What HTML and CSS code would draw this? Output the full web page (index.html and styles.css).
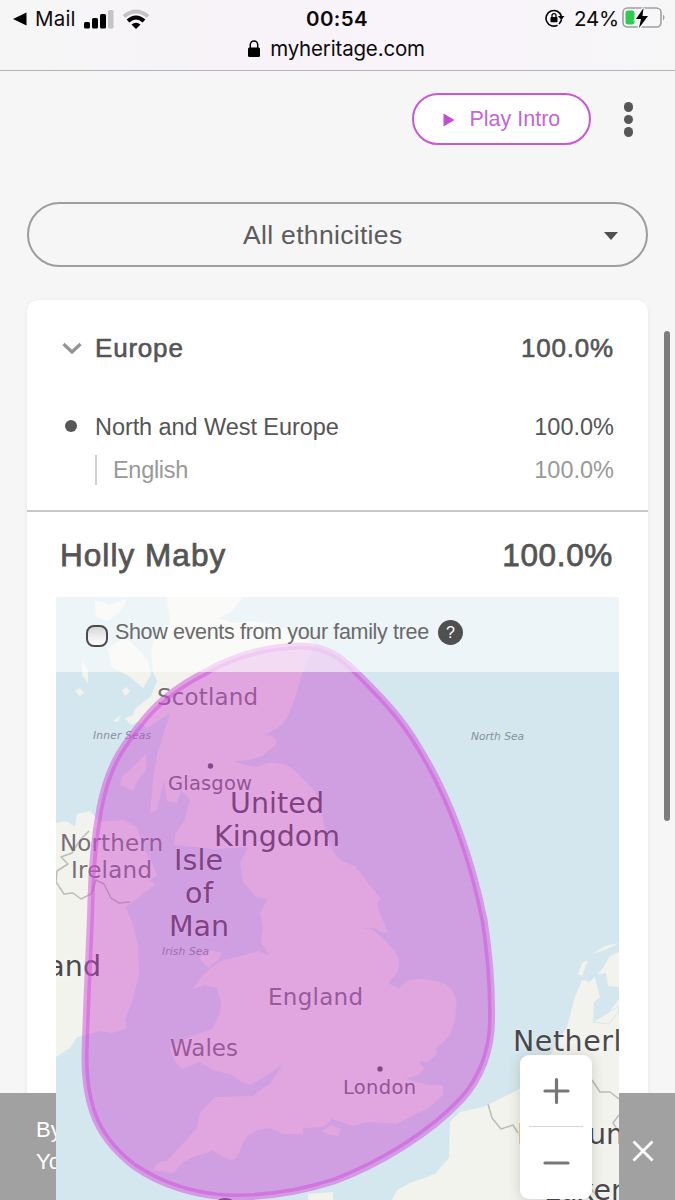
FILE: index.html
```html
<!DOCTYPE html>
<html lang="en">
<head>
<meta charset="utf-8">
<title>Ethnicity Estimate</title>
<link rel="stylesheet" href="styles.css">
</head>
<body>
<header class="browser-bar">
  <div class="status">
    <div class="status-left">
      <svg class="back" width="14" height="14" viewBox="0 0 14 14"><path d="M0 7 13.500 .5v13z"/></svg>
      <span class="carrier">Mail</span>
      <svg class="signal" width="30" height="20" viewBox="0 0 30 20"><rect x="0" y="13" width="6" height="6.500" rx="1.500"/><rect x="8" y="9" width="6" height="10.500" rx="1.500"/><rect x="16" y="5" width="6" height="14.500" rx="1.500"/><rect x="24" y="1" width="5.500" height="18.500" rx="1.500" fill="#c4c3c5"/></svg>
      <svg class="wifi" width="28" height="20" viewBox="0 0 28 20"><g fill="none" stroke-width="4"><path d="M2 7.500Q14-2.500 26 7.500" stroke="#c4c3c5"/><path d="M6 12Q14 5 22 12" stroke="#000"/></g><path d="M9.500 15.500Q14 12 18.500 15.500L14 20z"/></svg>
    </div>
    <span class="clock">00:54</span>
    <div class="status-right">
      <svg class="rotation" width="20" height="18" viewBox="0 0 20 18"><path d="M12.500 16.200A7.800 7.800 0 1 1 16.300 7" fill="none" stroke="#000" stroke-width="1.600"/><path d="M16.500 10.500a8 8 0 0 1-2.500 4.500" fill="none" stroke="#000" stroke-width="1.600"/><path d="M13 7h6.500l-3.200 4z"/><rect x="5.500" y="8" width="7" height="5.200" rx=".8"/><path d="M7 8.500V6.600a2 2 0 0 1 4 0v1.900" fill="none" stroke="#000" stroke-width="1.300"/></svg>
      <span class="level">24%</span>
      <svg class="battery" width="44" height="22" viewBox="0 0 44 22"><rect x="1" y="1" width="38" height="19" rx="4.500" fill="none" stroke="#a09fa1" stroke-width="1.600"/><path d="M41 7.500q3 3 0 6z" fill="#a09fa1"/><rect x="3.500" y="3.500" width="9" height="14" rx="2.500" fill="#2fcb51"/><path d="M21.500 1 14 12h5l-2 9 9-12h-5.500z" stroke="#f7f5f8" stroke-width="3" paint-order="stroke"/></svg>
    </div>
  </div>
  <div class="address"><svg width="12" height="17" viewBox="0 0 12 17"><rect y="7.500" width="12" height="9.500" rx="1.500"/><path d="M2.300 8V4.600a3.700 3.700 0 0 1 7.400 0V8" fill="none" stroke="#000" stroke-width="1.500"/></svg><span>myheritage.com</span></div>
</header>

<main class="page">
  <div class="toolbar">
    <button class="play"><svg width="12" height="14" viewBox="0 0 12 14"><path d="M.5.500 11.500 7 .5 13.500z"/></svg><span>Play Intro</span></button>
    <div class="more"><i></i><i></i><i></i></div>
  </div>
  <div class="select"><span>All ethnicities</span><svg width="14" height="8" viewBox="0 0 14 8"><path d="M0 0h14L7 8z"/></svg></div>

  <section class="card">
    <div class="breakdown">
      <div class="row region"><svg width="20" height="13" viewBox="0 0 20 13"><path d="m1.500 2 8.500 8 8.500-8" fill="none" stroke="#949494" stroke-width="3.200"/></svg><span class="name">Europe</span><span class="pct">100.0%</span></div>
      <div class="row group"><i class="dot"></i><span class="name">North and West Europe</span><span class="pct">100.0%</span></div>
      <div class="row ethnicity"><span class="name">English</span><span class="pct">100.0%</span></div>
    </div>
    <div class="person"><span class="name">Holly Maby</span><span class="pct">100.0%</span></div>
    <div class="map">
      <svg class="map-canvas" width="563" height="603" viewBox="56 597 563 603">
        <rect x="56" y="597" width="563" height="603" fill="#d5e7ee"/>
        <g fill="#f3f3ed">
          <path d="M167 597H243L232 611 219 618 233 623 250 621Q290 625 315 645L307 662 301 677 296 695 290 711Q285 724 277 728L267 734 255 737Q269 733 274 738 280 744 270 749L262 756 250 760 234 761Q243 765 257 767L268 763Q287 761 297 773L312 788Q320 796 321 808L324 825Q330 848 336 855 340 862 355 866L367 882 381 899 377 903 379 912 388 932 384 933 374 928 363 928 373 930 384 939 396 953Q402 964 396 974L388 983 399 989Q404 980 415 979 438 979 448 986 458 995 456 1010 455 1024 450 1035L441 1044 436 1048 437 1054 428 1062 419 1061 424 1069 418 1075 406 1078Q421 1086 443 1085L443 1095 427 1109 413 1115 397 1124 367 1122 353 1126 332 1119 323 1127 303 1128 303 1134 283 1134 270 1128 258 1130 247 1136 242 1145Q238 1161 230 1160L213 1151 193 1157 184 1162 173 1173 153 1170 157 1163 168 1160 197 1128 200 1113 215 1097 253 1096 260 1090 270 1084 282 1065Q269 1074 259 1080L250 1085 240 1081 232 1075 213 1070 200 1062 182 1069 174 1060 170 1048 182 1040 212 1029 220 1013 221 1003 217 988 205 985 193 989 202 976 212 967 221 961 241 956 258 951 270 956 261 942 263 928 260 913 268 899 256 897 243 882 240 862 249 847 214 849 174 845 175 835 185 819 190 800 181 790 177 803 167 801 164 780 157 810 150 813 153 780 157 755 165 729 170 713 147 728 139 722 130 725 135 709 151 696 157 681 153 672 151 652 155 636 170 624z"/>
          <path d="M95 600 109 605 127 599 120 612 107 621 96 616zM108 648 125 637 139 650 148 661 151 675 143 688 130 677 111 666zM82 661 88 670 88 683 82 675zM75 691l5-3 4 5-4 3zM122 690l5-3 3 5-5 4zM113 721l8-6-3 7zM125 718l9-3-4 9z"/>
          <path d="M122 777 135 765 146 754 146 770 138 780 133 791 126 787 120 785zM211 950l11 3-4 7-10 8-9-10z"/>
          <path d="M56 823 66 821 75 827 77 814 90 811 100 822 123 820 137 827 143 847 153 865 157 875 150 880 155 885 140 896 126 907 133 925 138 945 139 975 132 1002 125 1020 127 1028 112 1033 100 1031 77 1037 70 1048 56 1057z"/>
          <path d="M619 1200H392L397 1190 410 1183 435 1174 449 1158 450 1122 460 1112 483 1107 510 1094 535 1080 567 1027 575 997 582 980 590 982 603 968 610 956 619 952zM308 1194 333 1192V1200H308zM322 1131 331 1125 341 1129 338 1136 329 1135zM578 974 582 963 588 960 582 976zM592 954 605 946 619 943 607 949z"/>
        </g>
        <path d="M594 975 606 973 608 986 619 987V999L609 1012 593 1022 594 1002 600 997z" fill="#d5e7ee"/>
        <path d="M593 1022 606 1014 619 1006V1011L609 1024z" fill="#f3f3ed" stroke="#d5e7ee"/>
        <g fill="none" stroke="#bbb" stroke-width="1.500" stroke-linejoin="round">
          <path d="M89 831 80 840 72 853 61 857 68 864 57 871 56 882 64 894 73 893 81 899 91 894 96 880 104 884 111 898 119 903 130 902M488 1104 492 1118 501 1129 513 1125 518 1133M592 1080 600 1092 610 1092 619 1099M619 1115 613 1123 619 1132M588 1185 597 1196 604 1200"/>
        </g>
        <g class="label country">
          <text x="230" y="813" textLength="94">United</text><text x="214" y="846" textLength="126">Kingdom</text>
          <text x="174" y="870" textLength="49">Isle</text><text x="185" y="903" textLength="28">of</text><text x="169" y="936" textLength="60">Man</text>
          <text x="101" y="976" text-anchor="end">Ireland</text><text x="513" y="1051" textLength="179">Netherlands</text><text x="517" y="1144">Belgium</text><text x="544" y="1200">Luxembourg</text><text x="213" y="1219">Guernsey</text>
        </g>
        <g class="label nation">
          <text x="157" y="705" textLength="101">Scotland</text><text x="60" y="851" textLength="103">Northern</text><text x="71" y="878" textLength="81">Ireland</text><text x="268" y="1005" textLength="95">England</text><text x="170" y="1056" textLength="68">Wales</text>
        </g>
        <g class="label city"><text x="168" y="790" textLength="84">Glasgow</text><text x="343" y="1094" textLength="73">London</text></g>
        <g class="label sea"><text x="93" y="739" textLength="58">Inner Seas</text><text x="471" y="740" textLength="53">North Sea</text><text x="162" y="955" textLength="47">Irish Sea</text></g>
        <circle cx="210.500" cy="766" r="2.700" fill="#55545a"/><circle cx="380" cy="1069" r="2.700" fill="#55545a"/>
        <path d="M301 646C325 646 341 656 358 674 380 696 401 717 418 746 450 797 472 860 484 920 489 952 492 985 491.500 1018 492 1050 480 1080 461 1100 430 1133 380 1164 334 1181 300 1192 270 1197 232 1197 195 1196 160 1184 134 1166 100 1140 85 1110 85 1057 86 1010 90 940 91 900 92 860 95 835 100 808 108 765 123 745 147 716 165 695 188 681 206 672 235 655 270 646 301 646Z" fill="#c93cd0" fill-opacity=".42" stroke="#d14ddb" stroke-opacity=".5" stroke-width="7"/>
      </svg>
      <div class="events"><i class="check"></i><span>Show events from your family tree</span><b>?</b></div>
      <div class="zoom"><svg width="72" height="72" viewBox="0 0 72 72"><path d="M25 36h23M36.500 24.500v23"/></svg><hr><svg width="72" height="71" viewBox="0 0 72 71"><path d="M25 36h23"/></svg></div>
    </div>
  </section>
</main>
<div class="scrollbar"></div>
<footer class="cookies"><p>By<br>Yo</p><svg width="22" height="22" viewBox="0 0 22 22"><path d="m1.500 1.500 19 19m0-19-19 19" stroke="#fff" stroke-width="2.800"/></svg></footer>
</body>
</html>
```
FILE: styles.css
```css
* { box-sizing: border-box; }
body {
  margin: 0;
  width: 675px;
  height: 1200px;
  overflow: hidden;
  position: relative;
  background: #f6f6f6;
  color: #555;
  font-family: "Liberation Sans", Arial, sans-serif;
}
svg { display: block; flex: none; }
.browser-bar {
  height: 71px;
  border-bottom: 1px solid #b2b1b3;
  background: linear-gradient(90deg, #f6f6f6, #f7f3f8 35%, #f9f3fa 60%, #f6f6f7);
  color: #0b0b0c;
  font-family: Inter, sans-serif;
}
.status { display: grid; grid-template-columns: 1fr auto 1fr; height: 36px; align-items: center; }
.status-left { display: flex; align-items: center; padding: 1px 0 0 13px; }
.carrier { font-size: 20.500px; margin: 0 9px 0 8px; width: 40px; letter-spacing: .2px; }
.wifi { margin-left: 8px; }
.clock { font-size: 20.500px; font-weight: 600; width: 63px; white-space: nowrap; letter-spacing: .4px; padding-top: 1px; }
.status-right { display: flex; align-items: center; justify-content: flex-end; padding: 0 9px 0 0; }
.level { font-size: 20.500px; margin: 1px 4px 0 9px; width: 44px; white-space: nowrap; letter-spacing: -.2px; }
.address { display: flex; align-items: center; justify-content: center; gap: 10px; height: 25px; font-size: 20.500px; letter-spacing: -.17px; padding-right: 2px; }
.page { padding: 22px 27px 0; }
.toolbar { display: flex; justify-content: flex-end; align-items: center; gap: 33px; padding-right: 15px; height: 52px; }
.play {
  width: 179px; height: 52px; padding: 1px 0 0 29px;
  display: flex; align-items: center; gap: 15px;
  border: 2px solid #c957d7; border-radius: 26px; background: #fff;
  font: 21.500px "Liberation Sans", Arial, sans-serif; color: #c566d2;
}
.play svg { fill: #c54cd6; margin-top: 1px; }
.more { display: flex; flex-direction: column; gap: 3px; padding-top: 1px; }
.more i { width: 9.500px; height: 9.500px; border-radius: 50%; background: #575757; }
.select {
  margin-top: 57px; height: 65px; padding: 2px 28px 0 214px;
  display: flex; align-items: center; justify-content: space-between;
  border: 2px solid #9d9d9d; border-radius: 33px; font-size: 26.500px; letter-spacing: .32px; color: #5c5c5c;
}
.select svg { fill: #505050; margin-top: 1px; }
.card { margin-top: 33px; height: 960px; border-radius: 12px; background: #fff; box-shadow: 0 1px 5px rgba(0,0,0,.07); }
.breakdown { height: 212px; border-bottom: 2px solid #c8c8c8; padding: 30px 34px 0; }
.row { display: flex; align-items: center; }
.pct { margin-left: auto; }
.region { height: 36px; font-size: 26px; letter-spacing: .8px; -webkit-text-stroke: .6px #555; }
.region svg { margin: 0 13px 0 1px; }
.group { margin-top: 43px; height: 36px; font-size: 23.500px; }
.group .name { letter-spacing: -.07px; }
.dot { width: 12px; height: 12px; border-radius: 50%; background: #575757; margin: -2px 18px 0 4px; }
.ethnicity { margin: 10px 0 0 34px; height: 30px; padding-left: 16px; border-left: 2px solid #d0d0d0; font-size: 23.500px; color: #999; }
.ethnicity .name { letter-spacing: -.3px; }
.person { display: flex; align-items: center; height: 85px; padding: 1px 35px 0 33px; font-size: 31.500px; letter-spacing: .65px; -webkit-text-stroke: .75px #555; }
.person .name { letter-spacing: 1.050px; }
.map { position: relative; z-index: 2; width: 563px; height: 603px; margin-left: 29px; overflow: hidden; }
.label { font-family: "DejaVu Sans", sans-serif; fill: #4a484b; stroke: rgba(255,255,255,.35); stroke-width: 1.500px; paint-order: stroke; }
.country { font-size: 28.500px; }
.nation { font-size: 23px; fill: #747074; }
.city { font-size: 19.500px; fill: #6b666d; }
.sea { font-size: 10.700px; font-style: italic; fill: #84919a; stroke-width: 0; }
.events {
  position: absolute; top: 0; left: 0; width: 100%; height: 75px; padding: 0 0 4px 30px;
  display: flex; align-items: center; background: rgba(255,255,255,.6);
  font-size: 21.500px; letter-spacing: -.34px; color: #6a6a6a;
}
.check { width: 22px; height: 22px; margin: 7px 7px 0 0; border: 2px solid #4b4b4b; border-radius: 8px; background: linear-gradient(#d8d8d8, #fff); }
.events b { width: 25px; height: 25px; margin-left: 9px; border-radius: 50%; background: #505050; color: #fff; font-size: 16px; font-weight: 400; line-height: 25px; text-align: center; }
.zoom { position: absolute; left: 464px; top: 458px; width: 72px; height: 144px; border-radius: 9px; background: #fff; box-shadow: 0 1px 14px rgba(0,0,0,.16); }
.zoom path { stroke: #777; stroke-width: 3.200; stroke-linecap: round; }
.zoom hr { margin: -1px 9px 0; border: 0; height: 1px; background: #d4d4d4; }
.scrollbar { position: absolute; right: 5px; top: 331px; width: 6px; height: 490px; border-radius: 3px; background: #7d7d7d; }
.cookies {
  position: absolute; z-index: 1; left: 0; bottom: 0; width: 100%; height: 107px; padding: 9px 21px 0 36px;
  display: flex; align-items: center; justify-content: space-between; background: #a1a1a1; color: #fff;
}
.cookies p { margin: 0 0 10px; font-size: 22px; line-height: 32px; }
```
